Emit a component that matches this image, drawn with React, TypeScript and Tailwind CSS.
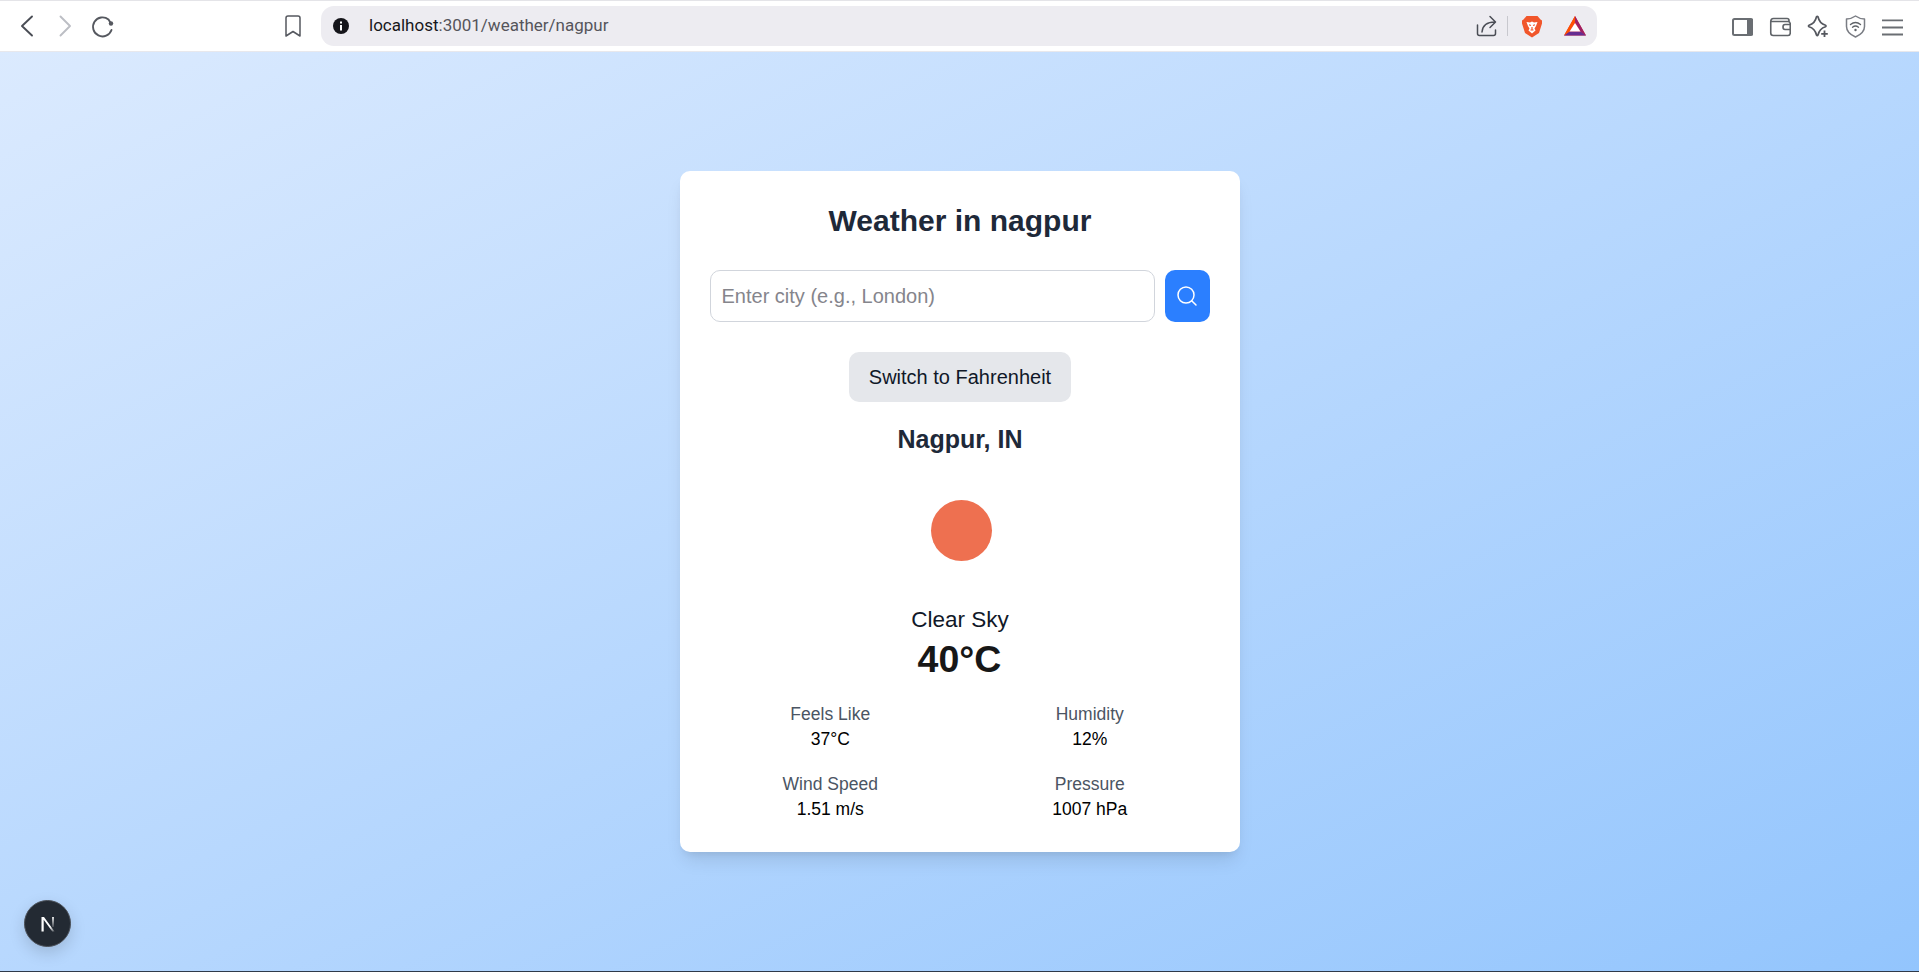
import React from "react";

function Stat({ label, value }: { label: string; value: string }) {
  return (
    <div className="text-center text-[17.5px] leading-[25px]">
      <p className="text-[#4b5563]">{label}</p>
      <p className="text-black">{value}</p>
    </div>
  );
}

function ChromeIcon({ children, w = 24, h = 24 }: { children: React.ReactNode; w?: number; h?: number }) {
  return (
    <svg width={w} height={h} viewBox={`0 0 ${w} ${h}`} fill="none" className="shrink-0">
      {children}
    </svg>
  );
}

export default function App() {
  return (
    <div className="flex h-[972px] w-full flex-col overflow-hidden font-['Liberation_Sans',Arial,sans-serif]">
      <header className="flex h-[52px] shrink-0 items-center border-t border-b border-t-[#e4e4e8] border-b-[#e8e8ec] bg-white">
        <div className="ml-[15px] flex items-center gap-[10px]">
          <ChromeIcon w={26} h={26}>
            <path d="M17 3.5 L7 13 L17 22.5" stroke="#4a4d55" strokeWidth="1.9" strokeLinecap="round" strokeLinejoin="round" />
          </ChromeIcon>
          <ChromeIcon w={26} h={26}>
            <path d="M9.500 3.500 L19 13 L9.500 22.500" stroke="#bcbec4" strokeWidth="1.9" strokeLinecap="round" strokeLinejoin="round" />
          </ChromeIcon>
          <ChromeIcon w={27} h={26}>
            <path d="M24.500 17 A9.500 9.500 0 1 1 21.500 6.500 L24 10.500" stroke="#55585f" strokeWidth="1.900" strokeLinecap="round" strokeLinejoin="round" />
            <circle cx="24" cy="10.500" r="2.200" fill="#55585f" />
          </ChromeIcon>
        </div>
        <div className="ml-[169px]">
          <ChromeIcon w={20} h={24}>
            <path d="M3 4 C3 2.800 3.800 2 5 2 H15 C16.200 2 17 2.800 17 4 V22 L10 17.500 L3 22 Z" stroke="#55585f" strokeWidth="1.500" strokeLinejoin="round" />
          </ChromeIcon>
        </div>
        <div className="ml-[18px] flex h-[40px] w-[1276px] shrink-0 items-center rounded-[13px] bg-[#edecf1] pl-[11px] pr-[10px]">
          <svg width="18" height="18" viewBox="0 0 18 18" className="shrink-0">
            <circle cx="9" cy="9" r="8" fill="#15151a" />
            <rect x="8" y="8" width="2" height="5.500" fill="#fff" />
            <rect x="8" y="4.500" width="2" height="2" fill="#fff" />
          </svg>
          <div className="ml-[19px] flex-1 font-['Roboto',sans-serif] text-[17px] text-[#55555b]">
            <span className="text-[#17171b]">localhost</span>:3001/weather/nagpur
          </div>
          <ChromeIcon w={24} h={24}>
            <path d="M3.500 11 V19.500 C3.500 21 4.500 21.500 5.500 21.500 H19.500 C20.500 21.500 21.500 21 21.500 19.500 V16" stroke="#4a4d55" strokeWidth="1.500" strokeLinecap="round" strokeLinejoin="round" />
            <path d="M8 18 C8.500 11.500 12.500 8 21 8 M16 2.500 L21.500 8 L16 13.500" stroke="#4a4d55" strokeWidth="1.500" strokeLinecap="round" strokeLinejoin="round" />
          </ChromeIcon>
          <div className="ml-[9px] h-[20px] w-px bg-[#c8c8ce]" />
          <div className="ml-[13px]">
            <ChromeIcon w={22} h={24}>
              <path d="M5.500 2 H16.500 L19.500 5.500 L21 6.500 L21 9.500 L18 19 L11 23.500 L4 19 L1 9.500 L1 6.500 L2.500 5.500 Z" fill="#f1562b" />
              <path d="M5.500 8 L9 8.500 L11 7.500 L13 8.500 L16.500 8 L15 12 L13.500 14.500 L14.500 16.500 L11 19.500 L7.500 16.500 L8.500 14.500 L7 12 Z" fill="#fff" />
              <path d="M8 10.800 L10 11.500 M14 10.800 L12 11.500 M11 13 V15.500 M9.500 16 L12.500 16" stroke="#f1562b" strokeWidth="1.200" />
            </ChromeIcon>
          </div>
          <div className="ml-[20px]">
            <ChromeIcon w={24} h={22}>
              <path d="M12 1 L23 20.500 H1 Z" fill="#e0303c" />
              <path d="M12 1 L23 20.500 L17.500 16.500 L12 7 Z" fill="#9e1f63" />
              <path d="M1 20.500 H23 L17.500 16.500 H6.500 Z" fill="#662d91" />
              <path d="M1 20.500 L6.500 16.500 L12 7 L12 1 Z" fill="#ff5000" />
              <path d="M12 8 L17.500 16.500 H6.500 Z" fill="#fff" />
            </ChromeIcon>
          </div>
        </div>
        <div className="ml-[133px] flex items-center gap-[15px]">
          <ChromeIcon w={23} h={24}>
            <rect x="3" y="5" width="19" height="16" rx="1.500" stroke="#6a6e73" strokeWidth="2" />
            <rect x="17" y="4.500" width="6" height="17" rx="1" fill="#6a6e73" />
          </ChromeIcon>
          <ChromeIcon w={23} h={24}>
            <path d="M21 7.500 V6.500 C21 5 20 4.500 19 4.500 H5.500 C3.500 4.500 2.750 5.500 2.750 7.500 V19 C2.750 20.500 3.750 21.500 5.250 21.500 H20 C21.500 21.500 22.250 20.500 22.250 19 V10 C22.250 8.500 21.500 7.500 20 7.500 H2.750" stroke="#5f6368" strokeWidth="1.600" />
            <path d="M22.250 10.500 H17 C15.500 10.500 15 11.500 15 13 C15 14.500 15.500 15.500 17 15.500 H22.250" stroke="#5f6368" strokeWidth="1.600" />
          </ChromeIcon>
          <ChromeIcon w={23} h={24}>
            <path d="M10.500 2.800 C11 2.200 11.500 2.200 12 2.800 C13 7.500 15 10 19.500 11.300 C20.200 11.700 20.200 12.300 19.500 12.700 C15 14 13 16.500 12 21 C11.500 21.700 11 21.700 10.500 21 C9.500 16.500 7.500 14 3 12.700 C2.300 12.300 2.300 11.700 3 11.300 C7.500 10 9.500 7.500 10.500 2.800 Z" fill="#fff" stroke="#55585f" strokeWidth="1.700" strokeLinejoin="round" />
            <path d="M18.500 16.500 V23 M15.200 19.800 H21.800" stroke="#55585f" strokeWidth="1.800" />
          </ChromeIcon>
          <ChromeIcon w={23} h={24}>
            <path d="M11.500 2 C14 3.800 17 4.800 20.500 5 V12.500 C20.500 17.500 16.500 20.800 11.500 23 C6.500 20.800 2.500 17.500 2.500 12.500 V5 C6 4.800 9 3.800 11.500 2 Z" stroke="#7a7d84" strokeWidth="1.500" strokeLinejoin="round" />
            <path d="M6.500 10.500 C9.500 8 13.500 8 16.500 10.500 M8.500 13.200 C10.500 11.700 12.500 11.700 14.500 13.200" stroke="#5f6368" strokeWidth="1.400" strokeLinecap="round" />
            <circle cx="11.500" cy="16" r="1.200" fill="#5f6368" />
          </ChromeIcon>
          <ChromeIcon w={21} h={24}>
            <path d="M0 6.300 H21 M0 13.500 H21 M0 20.500 H21" stroke="#6a6e73" strokeWidth="1.800" />
          </ChromeIcon>
        </div>
      </header>

      <main className="relative flex flex-1 items-center justify-center border-b border-b-[#2f3a4a] bg-gradient-to-br from-[#dbeafe] to-[#93c5fd]">
        <div className="w-[560px] rounded-[10px] bg-white p-[30px] shadow-[0_12px_18px_-4px_rgba(0,0,0,0.1),0_5px_8px_-5px_rgba(0,0,0,0.1)]">
          <h1 className="mb-[29px] pl-[1px] text-center text-[30px] font-bold leading-[40px] text-[#1e2939]">Weather in nagpur</h1>
          <div className="mb-[30px] flex gap-[10px]">
            <input
              readOnly
              placeholder="Enter city (e.g., London)"
              className="h-[52px] flex-1 rounded-[10px] border border-[#d1d5dc] px-[11px] text-[20px] outline-none placeholder:text-[#85858c]"
            />
            <button className="flex h-[52px] w-[45px] items-center justify-center rounded-[10px] bg-[#2b7fff]">
              <svg width="24" height="24" viewBox="0 0 24 24" fill="none">
                <circle cx="11" cy="11" r="8" stroke="#fff" strokeWidth="1.500" />
                <path d="M21 21 L16.700 16.700" stroke="#fff" strokeWidth="1.500" strokeLinecap="round" />
              </svg>
            </button>
          </div>
          <div className="mb-[21px] flex justify-center pl-[1px]">
            <button className="h-[50px] w-[222px] rounded-[10px] bg-[#e5e7eb] text-[20px] text-[#101828]">Switch to Fahrenheit</button>
          </div>
          <h2 className="mb-[13px] pl-[1px] text-center text-[25px] font-bold leading-[32px] text-[#1e2939]">Nagpur, IN</h2>
          <div className="flex h-[125px] items-center justify-center">
            <div className="ml-[3px] h-[61px] w-[61px] rounded-full bg-[#ee7050]" />
          </div>
          <p className="mt-[12px] pl-[1px] text-center text-[22.5px] leading-[30px] text-[#101828]">Clear Sky</p>
          <p className="mt-[2px] text-center text-[37.5px] font-bold leading-[45px] text-[#171717]">40°C</p>
          <div className="mt-[20px] grid grid-cols-2 gap-x-[20px] gap-y-[20px] pl-[1px]">
            <Stat label="Feels Like" value="37°C" />
            <Stat label="Humidity" value="12%" />
            <Stat label="Wind Speed" value="1.51 m/s" />
            <Stat label="Pressure" value="1007 hPa" />
          </div>
        </div>
        <div className="absolute bottom-[24px] left-[24px] flex h-[47px] w-[47px] items-center justify-center rounded-full border border-[#4a4f57] bg-[#232a33] shadow-[0_6px_16px_rgba(0,0,0,0.15)]">
          <svg width="15" height="16" viewBox="0 0 15 16" fill="none">
            <defs>
              <linearGradient id="nDiag" x1="3" y1="2" x2="14" y2="15.500" gradientUnits="userSpaceOnUse">
                <stop offset="0" stopColor="#fff" />
                <stop offset="0.65" stopColor="#fff" />
                <stop offset="1" stopColor="#fff" stopOpacity="0.25" />
              </linearGradient>
              <linearGradient id="nStem" x1="13" y1="1" x2="13" y2="11" gradientUnits="userSpaceOnUse">
                <stop offset="0" stopColor="#fff" stopOpacity="0.85" />
                <stop offset="1" stopColor="#fff" stopOpacity="0.15" />
              </linearGradient>
            </defs>
            <path d="M1.500 15.500 V1 H4 L14.500 15.500 H12.300 L3.700 3.800 V15.500 Z" fill="url(#nDiag)" />
            <rect x="12" y="1" width="2" height="10" fill="url(#nStem)" />
          </svg>
        </div>
      </main>
    </div>
  );
}
